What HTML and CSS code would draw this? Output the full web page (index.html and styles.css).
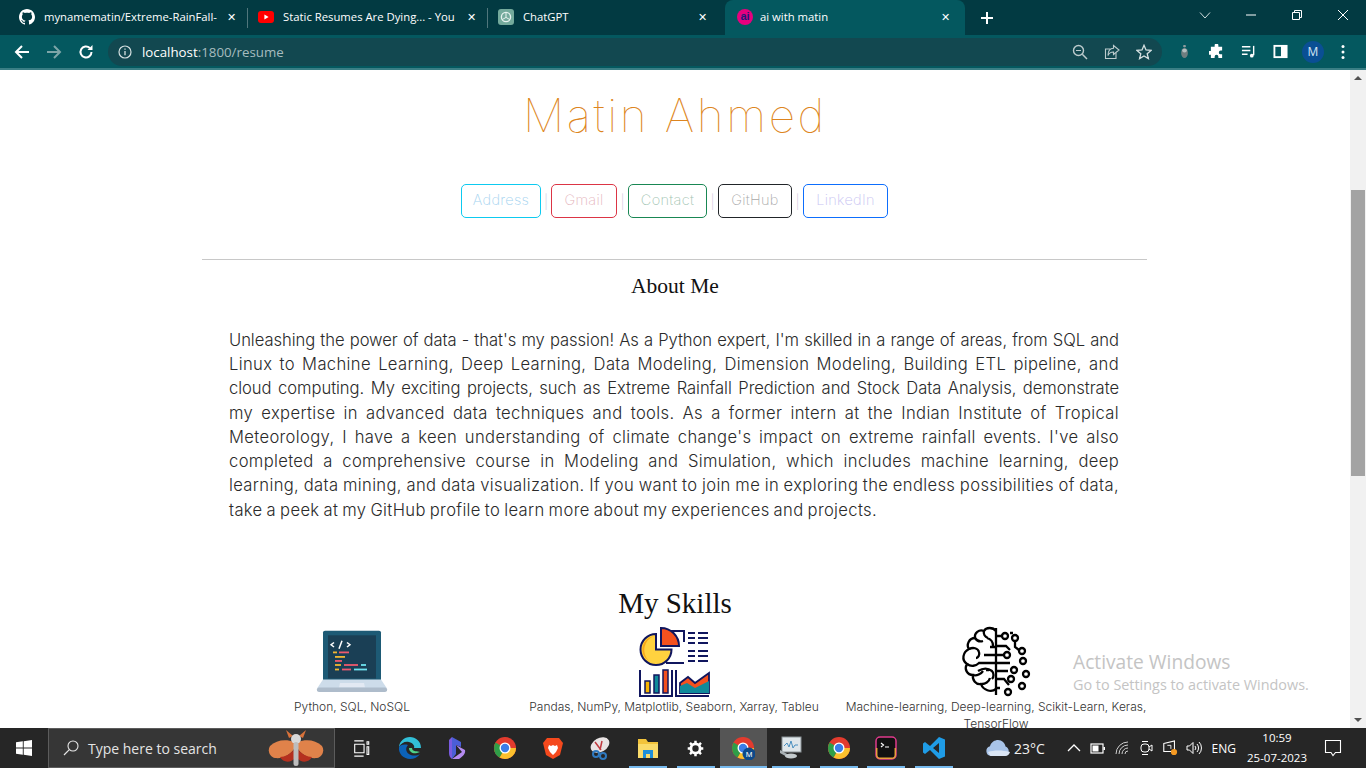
FILE: index.html
```html
<!DOCTYPE html>
<html>
<head>
  <title>ai with matin</title>
  <meta charset="UTF-8">
  <link rel="stylesheet" href="styles.css">
</head>
<body>
<div class="window">

  <!-- tab strip -->
  <div class="tabstrip">
    <div class="tab tab-first">
      <svg class="favicon" viewBox="0 0 16 16"><path fill="#fff" d="M8 0C3.6 0 0 3.6 0 8c0 3.5 2.3 6.5 5.5 7.6.4.1.5-.2.5-.4v-1.4c-2.2.5-2.7-1-2.7-1-.4-.9-.9-1.2-.9-1.2-.7-.5.1-.5.1-.5.8.1 1.2.8 1.2.8.7 1.2 1.9.9 2.3.7.1-.5.3-.9.5-1.1-1.8-.2-3.6-.9-3.6-4 0-.9.3-1.6.8-2.1-.1-.2-.4-1 .1-2.1 0 0 .7-.2 2.2.8.6-.2 1.3-.3 2-.3s1.4.1 2 .3c1.5-1 2.2-.8 2.2-.8.4 1.1.2 1.9.1 2.1.5.6.8 1.3.8 2.1 0 3.1-1.9 3.7-3.7 3.9.3.3.6.8.6 1.5v2.2c0 .2.1.5.6.4C13.7 14.5 16 11.5 16 8c0-4.4-3.6-8-8-8z"/></svg>
      <span class="tab-title">mynamematin/Extreme-RainFall-</span>
      <span class="tab-close">✕</span>
    </div>
    <div class="tab-sep"></div>
    <div class="tab">
      <svg class="favicon" viewBox="0 0 16 16"><rect y="2" width="16" height="12" rx="3" fill="#f00"/><path d="M6.4 5.4 10.6 8l-4.2 2.6z" fill="#fff"/></svg>
      <span class="tab-title">Static Resumes Are Dying... - You</span>
      <span class="tab-close">✕</span>
    </div>
    <div class="tab-sep"></div>
    <div class="tab tab-third">
      <svg class="favicon" viewBox="0 0 16 16"><rect width="16" height="16" rx="3" fill="#74aa9c"/><circle cx="8" cy="8" r="4.6" fill="none" stroke="#e6f2ef" stroke-width="1.3"/><path d="M8 3.4v5l3.8 2.2M4.2 10.6 8 8.4" fill="none" stroke="#e6f2ef" stroke-width="1"/></svg>
      <span class="tab-title">ChatGPT</span>
      <span class="tab-close">✕</span>
    </div>
    <div class="tab tab-active">
      <span class="favicon ai-icon">ai</span>
      <span class="tab-title">ai with matin</span>
      <span class="tab-close">✕</span>
    </div>
    <div class="new-tab">
      <svg viewBox="0 0 14 14" width="14" height="14"><path d="M7 1v12M1 7h12" stroke="#fff" stroke-width="2"/></svg>
    </div>
    <div class="window-btns">
      <svg class="win-btn win-chevron" viewBox="0 0 12 12"><path d="M1 3.5 6 9l5-5.500" fill="none" stroke="#cfdcdd" stroke-width="1"/></svg>
      <svg class="win-btn" viewBox="0 0 12 12"><path d="M1 6h10" stroke="#fff" stroke-width="1"/></svg>
      <svg class="win-btn" viewBox="0 0 12 12"><path d="M1.500 3.500h7v7h-7zM3.500 3.500v-2h7v7h-2" fill="none" stroke="#fff" stroke-width="1"/></svg>
      <svg class="win-btn" viewBox="0 0 12 12"><path d="M1 1l10 10M11 1 1 11" stroke="#fff" stroke-width="1"/></svg>
    </div>
  </div>

  <!-- toolbar -->
  <div class="toolbar">
    <svg class="nav-icon" viewBox="0 0 16 16"><path d="M15 8H2M8 2 2 8l6 6" fill="none" stroke="#fff" stroke-width="2"/></svg>
    <svg class="nav-icon" viewBox="0 0 16 16"><path d="M1 8h13M8 2l6 6-6 6" fill="none" stroke="#7da5a8" stroke-width="2"/></svg>
    <svg class="nav-icon" viewBox="0 0 16 16"><path d="M13.500 8A5.500 5.500 0 1 1 11.800 4" fill="none" stroke="#fff" stroke-width="2"/><path d="M14.500 1v5h-5z" fill="#fff"/></svg>
    <div class="omnibox">
      <svg class="info-icon" viewBox="0 0 14 14"><circle cx="7" cy="7" r="6" fill="none" stroke="#d5e0e1" stroke-width="1.200"/><path d="M7 6v4.300M7 3.500v1.300" stroke="#d5e0e1" stroke-width="1.300"/></svg>
      <span class="url"><b>localhost</b>:1800/resume</span>
      <div class="omni-actions">
        <svg class="omni-icon" viewBox="0 0 16 16"><circle cx="6.500" cy="6.500" r="5" fill="none" stroke="#bccbcd" stroke-width="1.400"/><path d="M10.300 10.300 15 15" stroke="#bccbcd" stroke-width="1.500"/><path d="M4 6.500h5" stroke="#bccbcd"/></svg>
        <svg class="omni-icon" viewBox="0 0 16 16"><path d="M12 9v5.500H1.500V5H6" fill="none" stroke="#bccbcd" stroke-width="1.100"/><path d="M9.500 1.500 15 6l-5.500 4.500V8C7 8 5 9 4 11.500 4 7.500 6 4.500 9.500 4.300z" fill="none" stroke="#bccbcd" stroke-width="1.100"/></svg>
        <svg class="omni-icon" viewBox="0 0 16 16"><path d="M8 1.300 10 6l5 .4-3.800 3.300 1.200 4.900L8 12l-4.400 2.600 1.200-4.900L1 6.400 6 6z" fill="none" stroke="#d5e0e1" stroke-width="1.300"/></svg>
      </div>
    </div>
    <div class="ext-icons">
      <svg class="ext-icon" viewBox="0 0 16 16"><ellipse cx="8" cy="9.500" rx="3.600" ry="5.500" fill="#6f7e80"/><ellipse cx="8" cy="7" rx="2.500" ry="2" fill="#b4bfc0"/><rect x="6.500" y="1" width="3" height="2.500" rx="1" fill="#8e9c9e"/></svg>
      <svg class="ext-icon" viewBox="0 0 16 16"><path fill="#fff" d="M6 1.500a2 2 0 0 1 4 0V3h4v4h-1.500a2 2 0 0 0 0 4H14v4h-4v-1.500a2 2 0 0 0-4 0V15H2v-3.500H.5a2 2 0 0 1 0-4H2V3h4z"/></svg>
      <svg class="ext-icon" viewBox="0 0 16 16"><path d="M1 3h9M1 7h9M1 11h6" stroke="#fff" stroke-width="1.500"/><path d="M13.500 2v10" stroke="#fff" stroke-width="1.500"/><circle cx="11.500" cy="12.500" r="2" fill="#fff"/></svg>
      <svg class="ext-icon" viewBox="0 0 16 16"><rect x="1.500" y="2" width="13" height="12" fill="none" stroke="#fff" stroke-width="2"/><rect x="8.500" y="2" width="6" height="12" fill="#fff"/></svg>
      <span class="avatar">M</span>
      <svg class="menu-dots" viewBox="0 0 4 16"><circle cx="2" cy="2.500" r="1.500" fill="#fff"/><circle cx="2" cy="8" r="1.500" fill="#fff"/><circle cx="2" cy="13.500" r="1.500" fill="#fff"/></svg>
    </div>
  </div>

  <!-- page -->
  <div class="viewport">
    <div class="page">
      <h1 class="name">Matin Ahmed</h1>

      <div class="contact-row">
        <a class="pill pill-info">Address</a><span class="pipe">|</span>
        <a class="pill pill-danger">Gmail</a><span class="pipe">|</span>
        <a class="pill pill-success">Contact</a><span class="pipe">|</span>
        <a class="pill pill-dark">GitHub</a><span class="pipe">|</span>
        <a class="pill pill-primary">LinkedIn</a>
      </div>

      <hr class="divider">

      <h2 class="about-title">About Me</h2>
      <p class="about-text">
        <span class="line line-tight">Unleashing the power of data - that's my passion! As a Python expert, I'm skilled in a range of areas, from SQL and</span>
        <span class="line">Linux to Machine Learning, Deep Learning, Data Modeling, Dimension Modeling, Building ETL pipeline, and</span>
        <span class="line line-tight">cloud computing. My exciting projects, such as Extreme Rainfall Prediction and Stock Data Analysis, demonstrate</span>
        <span class="line">my expertise in advanced data techniques and tools. As a former intern at the Indian Institute of Tropical</span>
        <span class="line">Meteorology, I have a keen understanding of climate change's impact on extreme rainfall events. I've also</span>
        <span class="line">completed a comprehensive course in Modeling and Simulation, which includes machine learning, deep</span>
        <span class="line">learning, data mining, and data visualization. If you want to join me in exploring the endless possibilities of data,</span>
        <span class="line line-last">take a peek at my GitHub profile to learn more about my experiences and projects.</span>
      </p>

      <h2 class="skills-title">My Skills</h2>
      <div class="skills">
        <div class="skill">
          <svg class="skill-icon" viewBox="0 0 72 72">
            <g transform="translate(0 3) scale(1 .9)">
              <path d="M7 4a2 2 0 0 1 2-2h54a2 2 0 0 1 2 2v57H7z" fill="#1d5a75"/>
              <rect x="12" y="7" width="48" height="48" fill="#1a3f55"/>
              <path d="M18 15l-3 2.500 3 2.500M26 13l-3 9M31 15l3 2.500-3 2.500" fill="none" stroke="#fff" stroke-width="1.500"/>
              <path d="M17 26h4" stroke="#f2b632" stroke-width="2"/><path d="M23 26h10" stroke="#ef5a6f" stroke-width="2"/>
              <path d="M19 31h10" stroke="#f2b632" stroke-width="2"/><path d="M19 35.500h7" stroke="#ef5a6f" stroke-width="2"/>
              <path d="M19 40h6" stroke="#f2b632" stroke-width="2"/><path d="M28 40h14" stroke="#ef5a6f" stroke-width="2"/><path d="M45 40h5" stroke="#6fe3f0" stroke-width="2"/>
              <path d="M19 45h4" stroke="#f2b632" stroke-width="2"/><path d="M26 45h9" stroke="#ef5a6f" stroke-width="2"/><path d="M38 45h13" stroke="#6fe3f0" stroke-width="2"/>
              <path d="M7 56h58l6 10H1z" fill="#cddcea"/>
              <path d="M24 60h24l1 5H23z" fill="#e2e9f3"/>
              <rect x="1" y="65" width="70" height="5" rx="2" fill="#aebccb"/>
            </g>
          </svg>
          <p class="skill-caption">Python, SQL, NoSQL</p>
        </div>
        <div class="skill">
          <svg class="skill-icon" viewBox="0 0 72 72">
            <path d="M18 8a15.500 15.500 0 1 0 15.500 15.500H18z" fill="#ffd23f" stroke="#10165e" stroke-width="2"/>
            <path d="M16 10a13.500 13.500 0 0 0-5 25 15 15 0 0 1 5-25z" fill="#f7a81b"/>
            <path d="M23 2A18 18 0 0 1 41 20H23z" fill="#f4511e" stroke="#10165e" stroke-width="2"/>
            <path d="M33 5h13v11M28 37h18" fill="none" stroke="#10165e" stroke-width="2"/>
            <path d="M50 7h7m3 0h10M50 12h7m3 0h10M50 17h7m3 0h10M50 25h7m3 0h10M50 30h7m3 0h10M50 35h7m3 0h10" stroke="#10165e" stroke-width="2"/>
            <path d="M2 44v26h32V44" fill="none" stroke="#10165e" stroke-width="2"/>
            <path d="M38 44v26h33" fill="none" stroke="#10165e" stroke-width="2"/>
            <rect x="7" y="55" width="5" height="12" fill="#f7b500" stroke="#10165e" stroke-width="1.500"/>
            <rect x="16" y="49" width="5" height="18" fill="#0f8a9a" stroke="#10165e" stroke-width="1.500"/>
            <rect x="25" y="44" width="5" height="23" fill="#f4511e" stroke="#10165e" stroke-width="1.500"/>
            <path d="M42 67V57l8-6 7 6 14-10v20z" fill="#f4511e" stroke="#10165e" stroke-width="1.800"/>
            <path d="M42 67v-7l7-3 8 5 14-7v12z" fill="#0f8a9a"/>
          </svg>
          <p class="skill-caption">Pandas, NumPy, Matplotlib, Seaborn, Xarray, Tableu</p>
        </div>
        <div class="skill">
          <svg class="skill-icon" viewBox="0 0 72 72">
            <g fill="none" stroke="#000" stroke-width="2.300">
              <path d="M36 2v67"/>
              <path d="M36 5c-3-4-10-4-12 0-5-2-10 2-9 7-6 0-9 7-6 11-6 3-8 11-2 15-3 5 0 11 6 11-1 5 3 10 8 9 2 6 10 9 15 5"/>
              <path d="M24 5c-1 3 1 6 4 7M15 12c2 3 5 4 8 3M9 23c4-2 9-1 10 3 1 3-1 6-3 6M7 38c4 3 9 2 12-1h17M13 49c4 1 8-1 10-4M22 58c3 0 7-2 8-6M30 21h6M27 12c4 1 6 4 6 8M24 29h12M18 45c5-3 10-3 14 0 2 2 2 6 0 8M26 44h3M30 37h3"/>
              <path d="M36 10h6M36 20h10l4 4M36 29h8M36 37h14M36 45h12M36 53h8l5 6M40 62h-4"/>
              <circle cx="45" cy="10" r="3"/><circle cx="55" cy="12" r="3"/><circle cx="62" cy="25" r="3"/>
              <circle cx="47" cy="29" r="3"/><circle cx="63" cy="35" r="3"/><circle cx="54" cy="44" r="3"/>
              <circle cx="66" cy="48" r="3"/><circle cx="51" cy="53" r="3"/><circle cx="62" cy="60" r="3"/><circle cx="48" cy="66" r="3"/>
              <path d="M55 16v5l4 3M50 7h3"/>
            </g>
          </svg>
          <p class="skill-caption">Machine-learning, Deep-learning, Scikit-Learn, Keras, TensorFlow</p>
        </div>
      </div>

      <div class="activate">
        <div class="activate-title">Activate Windows</div>
        <div class="activate-sub">Go to Settings to activate Windows.</div>
      </div>
    </div>

    <div class="scrollbar">
      <svg class="scroll-arrow" viewBox="0 0 16 16"><path d="M4 10l4-4 4 4z" fill="#505050"/></svg>
      <div class="scroll-track"><div class="scroll-thumb"></div></div>
      <svg class="scroll-arrow" viewBox="0 0 16 16"><path d="M4 6l4 4 4-4z" fill="#505050"/></svg>
    </div>
  </div>

  <!-- windows taskbar -->
  <div class="taskbar">
    <div class="start">
      <svg viewBox="0 0 16 16" width="16" height="16"><path fill="#fff" d="M0 2.300 6.800 1.300v6.300H0zM7.700 1.200 16 0v7.600H7.700zM0 8.400h6.800v6.300L0 13.700zM7.700 8.400H16V16l-8.300-1.200z"/></svg>
    </div>
    <div class="search">
      <svg viewBox="0 0 16 16" width="16" height="16"><circle cx="10" cy="6" r="5" fill="none" stroke="#e6e6e6" stroke-width="1.100"/><path d="M6.300 9.700 1 15" stroke="#e6e6e6" stroke-width="1.200"/></svg>
      <span class="search-text">Type here to search</span>
      <svg class="moth" viewBox="0 0 56 38" width="56" height="38">
        <path d="M26 13C18 10 8 11 2 17c-3 5 0 11 5 12 8 1 15-3 19-9z" fill="#e0824a"/>
        <path d="M30 13c8-3 18-2 24 4 3 5 0 11-5 12-8 1-15-3-19-9z" fill="#e0824a"/>
        <path d="M12 28c3 6 11 6 15 1v-9c-5 5-10 8-15 8zM44 28c-3 6-11 6-15 1v-9c5 5 10 8 15 8z" fill="#b5301f"/>
        <path d="M25 7l-7-6 3 8zM31 7l7-6-3 8z" fill="#d9723a"/>
        <ellipse cx="28" cy="10" rx="5" ry="5" fill="#d8d8d8"/>
        <rect x="25.500" y="13" width="5" height="24" rx="2.500" fill="#bdbdbd"/>
      </svg>
    </div>
    <div class="task-icons">
      <div class="task task-small">
        <svg viewBox="0 0 20 20"><path d="M1.500 1h11M1.500 19h11M2 5h11v10H2zM16.500 2h2v3h-2zM16.500 8h2v9h-2z" fill="none" stroke="#fff" stroke-width="1.300"/></svg>
      </div>
      <div class="task">
        <svg viewBox="0 0 24 24"><path d="M23 12C23 5 17.500 1 12 1 6 1 1.500 5.500 1 11c2-4 6-6 10-5 4 1 6 4 5 6h7z" fill="#32c0d8"/><path d="M1 11c-1 7 5 12 11 12 4 0 8-2 10-5-3 2-8 2-11 0-3-2-4-6-1-9-4-1-8 0-9 2z" fill="#0c62b8"/><path d="M11 12c0 4 4 6 8 5l3-1c-2-1-8 0-8-4z" fill="#4fd28a"/></svg>
      </div>
      <div class="task">
        <svg viewBox="0 0 24 24"><path d="M7 1l9 5v5l-5-2v9l-4 5z" fill="#4b5ed6"/><path d="M7 23c-3-2-3-5-3-7V4l3-3z" fill="#7a5be0"/><path d="M11 9l9 5c1 4-3 7-6 9H7l10-7z" fill="#b58bf0"/></svg>
      </div>
      <div class="task">
        <svg viewBox="0 0 24 24"><use href="#chrome-mark"/></svg>
      </div>
      <div class="task">
        <svg viewBox="0 0 24 24"><path d="M6 2h12l4 5-3 12-7 4-7-4L2 7z" fill="#f5491d"/><path d="M8 9l2 1 2-1 2 1 2-1 1 3-2 4-3 3-3-3-2-4z" fill="#fff"/></svg>
      </div>
      <div class="task">
        <svg viewBox="0 0 24 24"><ellipse cx="12" cy="9" rx="10" ry="7" fill="#e9e4e4" transform="rotate(-30 12 9)"/><path d="M7 6l6 8M14 5l-2 9" stroke="#c03a40" stroke-width="1.500"/><circle cx="8" cy="18" r="3" fill="none" stroke="#2f7ac0" stroke-width="2"/><circle cx="15" cy="20" r="3" fill="none" stroke="#2f7ac0" stroke-width="2"/></svg>
      </div>
      <div class="task task-open">
        <svg viewBox="0 0 24 24"><path d="M2 3h8l2 3h10v16H2z" fill="#f2c33b"/><path d="M2 8h20v14H2z" fill="#fadb6a"/><rect x="7" y="14" width="10" height="8" fill="#1f8fd8"/><rect x="10" y="18" width="4" height="4" fill="#fadb6a"/></svg>
      </div>
      <div class="task task-open task-small">
        <svg viewBox="0 0 24 24"><circle cx="12" cy="12" r="6.500" fill="none" stroke="#fff" stroke-width="4"/><path d="M12 1v4M12 19v4M1 12h4M19 12h4M4.200 4.200l2.800 2.800M17 17l2.800 2.800M4.200 19.800 7 17M17 7l2.800-2.800" stroke="#fff" stroke-width="3.500"/></svg>
      </div>
      <div class="task task-open task-active">
        <svg viewBox="0 0 24 24"><use href="#chrome-mark"/><circle cx="18" cy="18" r="6.500" fill="#0d4a8a"/><text x="18" y="21" class="badge-m">M</text></svg>
      </div>
      <div class="task task-open">
        <svg viewBox="0 0 24 24"><rect x="3" y="1" width="19" height="15" fill="#dfe6ea" stroke="#8a9296"/><path d="M5 10l3-3 2 4 2-6 2 7 2-3h3" fill="none" stroke="#4a8fc0"/><path d="M1 14l9 5v3l-9-5z" fill="#a8b0b4"/><ellipse cx="12" cy="20" rx="6" ry="2.500" fill="#c4cbce"/></svg>
      </div>
      <div class="task task-open">
        <svg viewBox="0 0 24 24"><use href="#chrome-mark"/></svg>
      </div>
      <div class="task task-open">
        <svg viewBox="0 0 24 24"><rect x="2" y="1" width="20" height="22" rx="4" fill="#111" stroke="#e03a8c" stroke-width="1.500"/><path d="M2.700 12v7a3.500 3.500 0 0 0 3.500 3.300h11.600a3.500 3.500 0 0 0 3.500-3.300v-7" fill="none" stroke="#e9a23b" stroke-width="1.500"/><path d="M7 7l2.500 2L7 11M11 11h4" fill="none" stroke="#fff" stroke-width="1.200"/></svg>
      </div>
      <div class="task task-open">
        <svg viewBox="0 0 24 24"><path d="M17 1 8 10 3 6 1 7.500v9L3 18l5-4 9 9 6-2.500v-17zM17 7v10l-6-5z" fill="#1f9ce6"/></svg>
      </div>
    </div>
    <div class="weather">
      <svg viewBox="0 0 26 18" width="26" height="18"><path d="M6 17a5 5 0 0 1-1-9.800C6 3 10 1 13 1c4 0 7 3 7.500 6.500A5 5 0 0 1 20 17z" fill="#a9c4e8"/><path d="M3 13c6-2 14-2 22 0-1 3-3 4-5 4H6c-1 0-2-2-3-4z" fill="#dbe6f5"/></svg>
      <span>23°C</span>
    </div>
    <div class="tray">
      <svg class="tray-icon" viewBox="0 0 16 16"><path d="M2 11l6-6 6 6" fill="none" stroke="#fff" stroke-width="1.300"/></svg>
      <svg class="tray-icon" viewBox="0 0 16 16"><rect x="1" y="4" width="12" height="9" fill="none" stroke="#fff" stroke-width="1.200"/><rect x="2.500" y="5.500" width="6" height="6" fill="#fff"/><rect x="13.500" y="7" width="1.500" height="3" fill="#fff"/></svg>
      <svg class="tray-icon" viewBox="0 0 16 16"><g fill="none" stroke="#d0d0d0" stroke-width="1"><path d="M2 14A12 12 0 0 1 14 2"/><path d="M5 14a9 9 0 0 1 9-9"/><path d="M8 14a6 6 0 0 1 6-6"/><path d="M11 14a3 3 0 0 1 3-3"/></g></svg>
      <svg class="tray-icon" viewBox="0 0 16 16"><rect x="3" y="4" width="8" height="8" rx="3" fill="none" stroke="#fff"/><path d="M11 7l3-2v6l-3-2M4 1.500h6M4 14.500h6" fill="none" stroke="#fff"/></svg>
      <svg class="tray-icon" viewBox="0 0 18 18"><path d="M2 4l12-3v12H2z" fill="none" stroke="#fff" stroke-width="1.200"/><path d="M6 6h4v4" fill="none" stroke="#fff"/><circle cx="13.500" cy="13.500" r="3.500" fill="#f59a23"/></svg>
      <svg class="tray-icon" viewBox="0 0 16 16"><path d="M1 6h2.500L7 2.500v11L3.500 10H1z" fill="none" stroke="#fff"/><path d="M9 6a3 3 0 0 1 0 4M11 4a6 6 0 0 1 0 8M13 2a8.500 8.500 0 0 1 0 12" fill="none" stroke="#fff"/></svg>
      <span class="lang">ENG</span>
    </div>
    <div class="clock"><span>10:59</span><span>25-07-2023</span></div>
    <div class="notify">
      <svg viewBox="0 0 18 18" width="18" height="18"><path d="M1.500 1.500h15v12h-5L9 16.500 7 13.500H1.500z" fill="none" stroke="#fff" stroke-width="1.100"/></svg>
    </div>
  </div>
</div>

<svg class="defs" width="0" height="0">
  <defs>
    <g id="chrome-mark">
      <circle cx="12" cy="12" r="11" fill="#e33b2e"/>
      <path d="M12 12 2.500 17.500A11 11 0 0 1 2.500 6.500z" fill="#e33b2e"/>
      <path d="M12 12H23a11 11 0 0 1-16.500 9.500z" fill="#fbc02d"/>
      <path d="M12 12 6.500 21.500A11 11 0 0 1 1 12 11 11 0 0 1 2.500 6.500z" fill="#2f9e48"/>
      <circle cx="12" cy="12" r="5.500" fill="#fff"/>
      <circle cx="12" cy="12" r="4.200" fill="#3b7de8"/>
    </g>
  </defs>
</svg>
</body>
</html>
```

FILE: styles.css
```css
html, body {
  margin: 0;
  padding: 0;
  height: 768px;
  overflow: hidden;
}

body {
  font-family: "Open Sans", "Liberation Sans", sans-serif;
}

.window {
  display: flex;
  flex-direction: column;
  width: 1366px;
  height: 768px;
  overflow: hidden;
}

.defs {
  position: absolute;
}

/* Tab strip */
.tabstrip {
  display: flex;
  align-items: flex-end;
  height: 35px;
  padding-top: 0;
  background-color: #023a42;
  color: #fff;
  font-size: 12px;
  flex: none;
}

.tab {
  display: flex;
  align-items: center;
  flex: none;
  box-sizing: border-box;
  width: 239px;
  height: 35px;
  padding: 0 8px 2px 10px;
}

.tab-first {
  width: 247px;
  padding-left: 19px;
}

.tab-third {
  width: 237px;
  padding-left: 10px;
  padding-right: 15px;
}

.tab-sep {
  flex: none;
  width: 1px;
  height: 20px;
  margin-bottom: 7px;
  background-color: #50767c;
}

.tab-active {
  width: 240px;
  height: 35px;
  padding-left: 12px;
  padding-right: 12px;
  background-color: #04585f;
  border-radius: 8px 8px 0 0;
}

.favicon {
  flex: none;
  width: 16px;
  height: 16px;
  margin-right: 9px;
}

.ai-icon {
  margin-right: 7px;
  border-radius: 50%;
  background-color: #e6007e;
  color: #1a1a7a;
  font: bold 11px/15px "Liberation Sans", sans-serif;
  text-align: center;
}

.tab-title {
  flex: 1;
  min-width: 0;
  overflow: hidden;
  white-space: nowrap;
  font-family: "Open Sans", sans-serif;
  font-size: 11.300px;
}

.tab-close {
  flex: none;
  width: 16px;
  text-align: center;
  font-size: 11px;
  color: #fff;
}

.new-tab {
  display: flex;
  justify-content: center;
  align-items: center;
  width: 44px;
  height: 35px;
}

.window-btns {
  display: flex;
  margin-left: auto;
  height: 35px;
}

.win-btn {
  box-sizing: border-box;
  width: 46px;
  height: 30px;
  padding: 9px 17px;
}

/* Toolbar */
.toolbar {
  display: flex;
  align-items: center;
  flex: none;
  box-sizing: border-box;
  height: 35px;
  padding: 0 4px 0 14px;
  background-color: #04585f;
  border-bottom: 2px solid #3a7f85;
}

.nav-icon {
  flex: none;
  width: 16px;
  height: 16px;
  margin-right: 16px;
}

.omnibox {
  display: flex;
  align-items: center;
  flex: none;
  box-sizing: border-box;
  width: 1054px;
  height: 28px;
  margin-left: -2px;
  padding: 0 10px;
  background-color: #124850;
  border-radius: 14px;
}

.info-icon {
  flex: none;
  width: 14px;
  height: 14px;
  margin-right: 10px;
}

.url {
  font-size: 13.300px;
  color: #a6bcbf;
  white-space: nowrap;
}

.url b {
  font-weight: 400;
  color: #fff;
}

.omni-actions {
  display: flex;
  gap: 16px;
  margin-left: auto;
}

.omni-icon {
  width: 16px;
  height: 16px;
}

.ext-icons {
  display: flex;
  align-items: center;
  gap: 17px;
  margin-left: 15px;
}

.ext-icon {
  width: 15px;
  height: 15px;
}

.avatar {
  width: 22px;
  height: 22px;
  margin-left: -3px;
  border-radius: 50%;
  background-color: #0a4f94;
  color: #d7e6f5;
  font-size: 12px;
  line-height: 22px;
  text-align: center;
}

.menu-dots {
  width: 4px;
  height: 16px;
  margin-left: 0;
}

/* Page */
.viewport {
  position: relative;
  display: flex;
  flex: 1;
  min-height: 0;
  background-color: #fff;
}

.page {
  flex: 1;
  min-width: 0;
  overflow: hidden;
  font-family: Inter, "Noto Sans", sans-serif;
}

.name {
  margin: 18px 0 0;
  font-size: 46px;
  font-weight: 100;
  line-height: 54px;
  letter-spacing: 2.600px;
  text-align: center;
  color: #dd8520;
}

.contact-row {
  display: flex;
  justify-content: center;
  align-items: center;
  margin-top: 42px;
  padding-right: 1px;
  height: 34px;
}

.pill {
  box-sizing: border-box;
  flex: none;
  height: 34px;
  border: 1px solid;
  border-radius: 5px;
  font-size: 14.500px;
  font-weight: 200;
  line-height: 30px;
  letter-spacing: 0.300px;
  text-align: center;
}

.pill-info { border-color: #0dcaf0; color: #a5d3ef; width: 80px; }
.pill-danger { border-color: #dc3545; color: #e5b5bd; width: 66px; }
.pill-success { border-color: #198754; color: #9fc4b2; width: 79px; }
.pill-dark { border-color: #212529; color: #a9a9a9; width: 74px; }
.pill-primary { border-color: #0d6efd; color: #c8c4f2; width: 85px; }

.pipe {
  width: 11px;
  font-size: 14px;
  font-weight: 200;
  text-align: center;
  color: #cfc8e0;
}

.pipe:first-of-type {
  width: 10px;
}

.divider {
  width: 945px;
  margin: 41px auto 0 202px;
  border: none;
  border-top: 1px solid #c8c8c8;
}

.about-title {
  margin: 12px 0 0;
  font-family: "Liberation Serif", serif;
  font-size: 21.500px;
  font-weight: 400;
  line-height: 28px;
  text-align: center;
  color: #111;
}

.about-text {
  box-sizing: border-box;
  width: 890px;
  margin: 28px 0 0 229px;
  font-size: 16.600px;
  font-weight: 300;
  line-height: 24.240px;
  letter-spacing: 0.350px;
  word-spacing: -1px;
  color: #2a2a2a;
}

.line {
  display: block;
  text-align: justify;
  text-align-last: justify;
}

.line-tight {
  letter-spacing: -0.050px;
  word-spacing: -1.500px;
}

.line-last {
  text-align-last: left;
}

.skills-title {
  margin: 64px 0 0;
  font-family: "Liberation Serif", serif;
  font-size: 29px;
  font-weight: 400;
  line-height: 34px;
  text-align: center;
  color: #111;
}

.skills {
  display: grid;
  grid-template-columns: repeat(3, 322px);
  justify-content: start;
  margin-left: 191px;
  margin-top: 6px;
}

.skill {
  display: flex;
  flex-direction: column;
  align-items: center;
  text-align: center;
}

.skill-icon {
  width: 72px;
  height: 72px;
}

.skill-caption {
  width: 310px;
  margin: 0;
  font-size: 12px;
  font-weight: 300;
  line-height: 17px;
  color: #333;
}

.activate {
  position: absolute;
  left: 1073px;
  top: 578px;
  color: #c4c4c4;
}

.activate-title {
  font-family: "Open Sans", sans-serif;
  font-size: 19.200px;
  line-height: 27px;
}

.activate-sub {
  font-family: "Open Sans", sans-serif;
  font-size: 14.400px;
  line-height: 19px;
}

/* Scrollbar */
.scrollbar {
  display: flex;
  flex-direction: column;
  flex: none;
  width: 16px;
  background-color: #f1f1f1;
}

.scroll-arrow {
  flex: none;
  width: 16px;
  height: 16px;
}

.scroll-track {
  flex: 1;
  padding: 104px 1px 0;
}

.scroll-thumb {
  height: 286px;
  background-color: #a3a3a3;
}

/* Taskbar */
.taskbar {
  display: flex;
  align-items: stretch;
  flex: none;
  height: 40px;
  background-color: #262626;
  color: #fff;
  font-family: "Open Sans", sans-serif;
}

.start {
  display: flex;
  flex: none;
  justify-content: center;
  align-items: center;
  width: 48px;
}

.search {
  display: flex;
  align-items: center;
  flex: none;
  box-sizing: border-box;
  width: 287px;
  margin-right: 3px;
  padding-left: 14px;
  background-color: #363636;
  border: 1px solid #5c5c5c;
}

.search-text {
  margin-left: 9px;
  font-size: 14px;
  color: #e4e4e4;
}

.moth {
  margin-left: auto;
  margin-right: 10px;
}

.task-icons {
  display: flex;
  flex: none;
}

.task {
  display: flex;
  flex: none;
  justify-content: center;
  align-items: center;
  box-sizing: border-box;
  width: 47.700px;
  height: 40px;
}

.task svg {
  width: 24px;
  height: 24px;
}

.task-small svg {
  width: 17px;
  height: 17px;
}

.task-open {
  background-image: linear-gradient(#76b9ed, #76b9ed);
  background-repeat: no-repeat;
  background-position: center bottom;
  background-size: 38px 2px;
}

.task-active {
  background-color: #555;
  background-size: 100% 2px;
}

.badge-m {
  font: 8px "Liberation Sans", sans-serif;
  fill: #fff;
  text-anchor: middle;
}

.weather {
  display: flex;
  align-items: center;
  flex: none;
  gap: 3px;
  margin-left: 27px;
  font-size: 14px;
  color: #f0f0f0;
}

.tray {
  display: flex;
  align-items: center;
  flex: none;
  gap: 8px;
  margin-left: auto;
}

.tray-icon {
  width: 16px;
  height: 16px;
}

.lang {
  margin-left: 2px;
  font-size: 12px;
}

.clock {
  display: flex;
  flex: none;
  flex-direction: column;
  justify-content: center;
  align-items: center;
  width: 70px;
  margin-left: 6px;
  font-size: 11.500px;
  line-height: 20px;
}

.notify {
  display: flex;
  flex: none;
  justify-content: center;
  align-items: center;
  width: 42px;
  margin-right: 12px;
}
```
